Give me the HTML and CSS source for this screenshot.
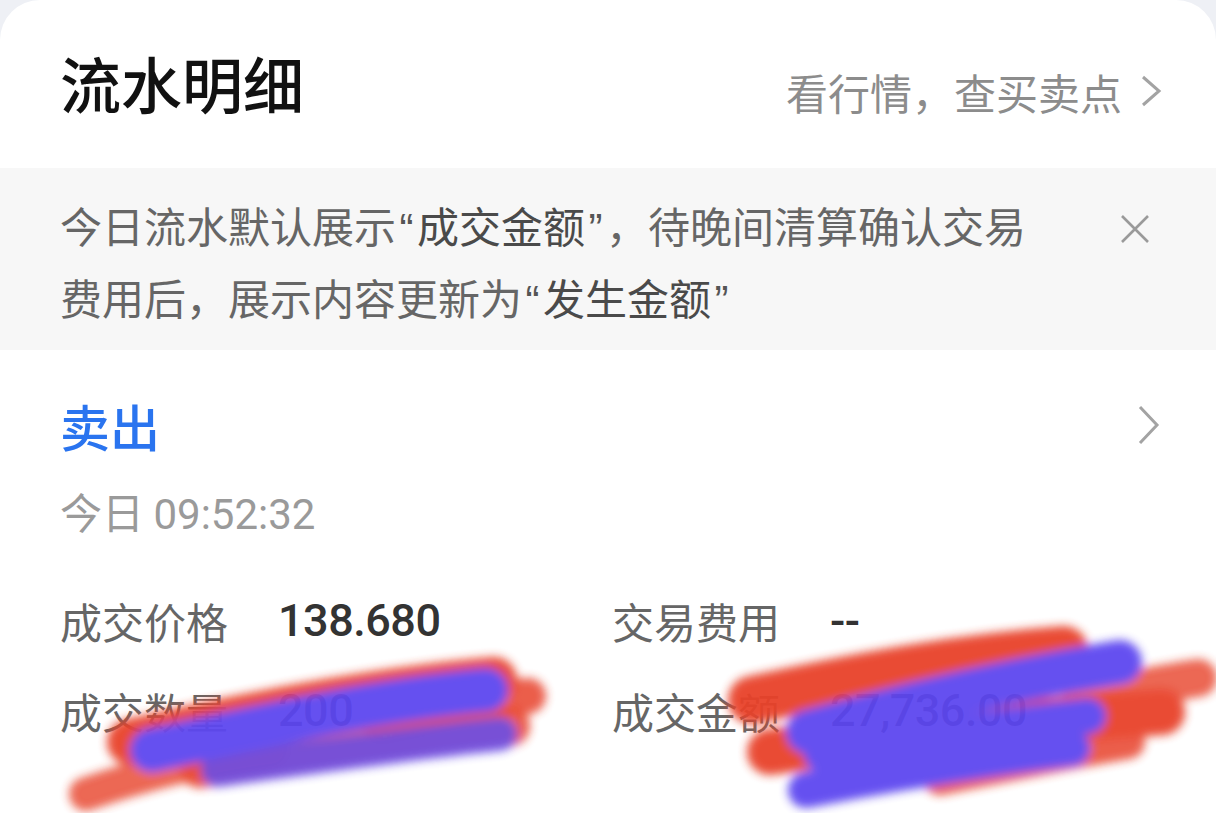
FILE: index.html
```html
<!DOCTYPE html>
<html lang="zh-CN">
<head>
    <meta charset="UTF-8">
    <title>流水明细</title>
    <link rel="stylesheet" href="styles.css">
</head>
<body>

<div class="card">
    <div class="header">
        <h1 class="title">流水明细</h1>
        <a class="market-link">看行情，查买卖点
            <svg class="chevron" width="22" height="34" viewBox="0 0 22 34"><path d="M3 3 L19 17 L3 31" fill="none" stroke="#a3a3a3" stroke-width="3"/></svg>
        </a>
    </div>

    <div class="notice">
        <p class="notice-text">今日流水默认展示<span class="q">“</span><b>成交金额</b><span class="q">”</span>，待晚间清算确认交易费用后，展示内容更新为<span class="q">“</span><b>发生金额</b><span class="q">”</span></p>
        <svg class="close" width="30" height="30" viewBox="0 0 30 30"><path d="M2 2 L28 28 M28 2 L2 28" fill="none" stroke="#9a9a9a" stroke-width="2.6"/></svg>
    </div>

    <div class="trade">
        <div class="trade-head">
            <span class="trade-type">卖出</span>
            <svg class="chevron" width="24" height="42" viewBox="0 0 24 42"><path d="M3 3 L20 21 L3 39" fill="none" stroke="#a3a3a3" stroke-width="3"/></svg>
        </div>
        <div class="trade-time">今日 <span class="num">09:52:32</span></div>

        <div class="trade-grid">
            <span class="label">成交价格</span>
            <span class="value num">138.680</span>
            <span class="label">交易费用</span>
            <span class="value num">--</span>

            <span class="label">成交数量</span>
            <span class="value num">200</span>
            <span class="label">成交金额</span>
            <span class="value num">27,736.00</span>
        </div>

        <!-- hand drawn cover over the quantity and amount -->
        <svg class="scribble" width="1216" height="813" viewBox="0 0 1216 813">
            <defs>
                <filter id="soft" x="-20%" y="-80%" width="140%" height="260%">
                    <feGaussianBlur stdDeviation="5"/>
                </filter>
            </defs>
            <g filter="url(#soft)" fill="none" stroke-linecap="round" opacity="0.95">
                <g stroke="#e8432b">
                    <path d="M130 742 C260 712 380 690 494 680" stroke-width="46"/>
                    <path d="M86 794 C150 772 210 758 270 750" stroke-width="34" opacity="0.85"/>
                    <path d="M200 768 C300 752 420 736 510 726" stroke-width="40" opacity="0.9"/>
                    <path d="M380 722 C440 710 490 700 528 696" stroke-width="36" opacity="0.9"/>
                    <path d="M752 700 C860 676 960 658 1064 650" stroke-width="48"/>
                    <path d="M1080 700 C1130 690 1170 682 1198 678" stroke-width="38" opacity="0.85"/>
                    <path d="M770 752 C900 734 1040 720 1162 712" stroke-width="46"/>
                    <path d="M940 778 C1010 764 1070 752 1128 742" stroke-width="34" opacity="0.9"/>
                </g>
                <g stroke="#5d47f0">
                    <path d="M152 750 C270 724 380 700 486 690" stroke-width="44"/>
                    <path d="M218 770 C320 756 420 742 500 734" stroke-width="34" opacity="0.85"/>
                    <path d="M808 732 C900 706 1010 680 1120 662" stroke-width="44"/>
                    <path d="M822 754 C900 742 1000 726 1088 716" stroke-width="36"/>
                    <path d="M806 790 C890 774 990 758 1072 748" stroke-width="36"/>
                </g>
            </g>
        </svg>
    </div>
</div>

</body>
</html>
```

FILE: styles.css
```css
body {
    margin: 0;
    background: #eef0f5;
    font-family: "Noto Sans CJK SC", sans-serif;
    overflow: hidden;
}

.card {
    background: #ffffff;
    border-radius: 40px 40px 0 0;
    min-height: 813px;
}

.header {
    height: 168px;
    display: flex;
    justify-content: space-between;
    align-items: center;
    padding: 0 54px 0 60px;
    box-sizing: border-box;
}

.title {
    margin: 0;
    font-size: 61px;
    font-weight: 500;
    color: #111111;
    line-height: 1;
    position: relative;
    top: -2px;
}

.market-link {
    display: flex;
    align-items: center;
    gap: 18px;
    font-size: 42px;
    color: #8c8c8c;
    position: relative;
    top: 7px;
}

.notice {
    height: 182px;
    background: #f7f7f7;
    display: flex;
    justify-content: space-between;
    align-items: flex-start;
    padding: 0 66px 0 60px;
    box-sizing: border-box;
}

.notice-text {
    margin: 23px 0 0;
    width: 990px;
    font-size: 42px;
    line-height: 68px;
    color: #666666;
}

.notice-text b {
    font-weight: normal;
    color: #4a4a4a;
}

.notice-text .q {
    display: inline-block;
    width: 21px;
    text-align: center;
    font-family: "Liberation Sans", sans-serif;
    color: #555555;
}

.close {
    margin-top: 46px;
}

.trade {
    position: relative;
    padding: 45px 55px 0 60px;
}

.trade-head {
    display: flex;
    justify-content: space-between;
    align-items: center;
    height: 60px;
}

.trade-type {
    font-size: 50px;
    font-weight: 500;
    color: #2a74ef;
    line-height: 60px;
}

.trade-time {
    margin-top: 28px;
    font-size: 42px;
    line-height: 56px;
    color: #9a9a9a;
}

.num {
    font-family: Roboto, "Noto Sans CJK SC", sans-serif;
}

.trade-grid {
    margin-top: 47px;
    display: grid;
    grid-template-columns: 218px 334px 218px auto;
    grid-auto-rows: 60px;
    row-gap: 30px;
    align-items: center;
}

.label {
    font-size: 42px;
    color: #666666;
}

.value {
    font-size: 45px;
    font-weight: 500;
    color: #333333;
    letter-spacing: -0.5px;
}

.scribble {
    position: absolute;
    top: -350px;
    left: 0;
    pointer-events: none;
}
```
